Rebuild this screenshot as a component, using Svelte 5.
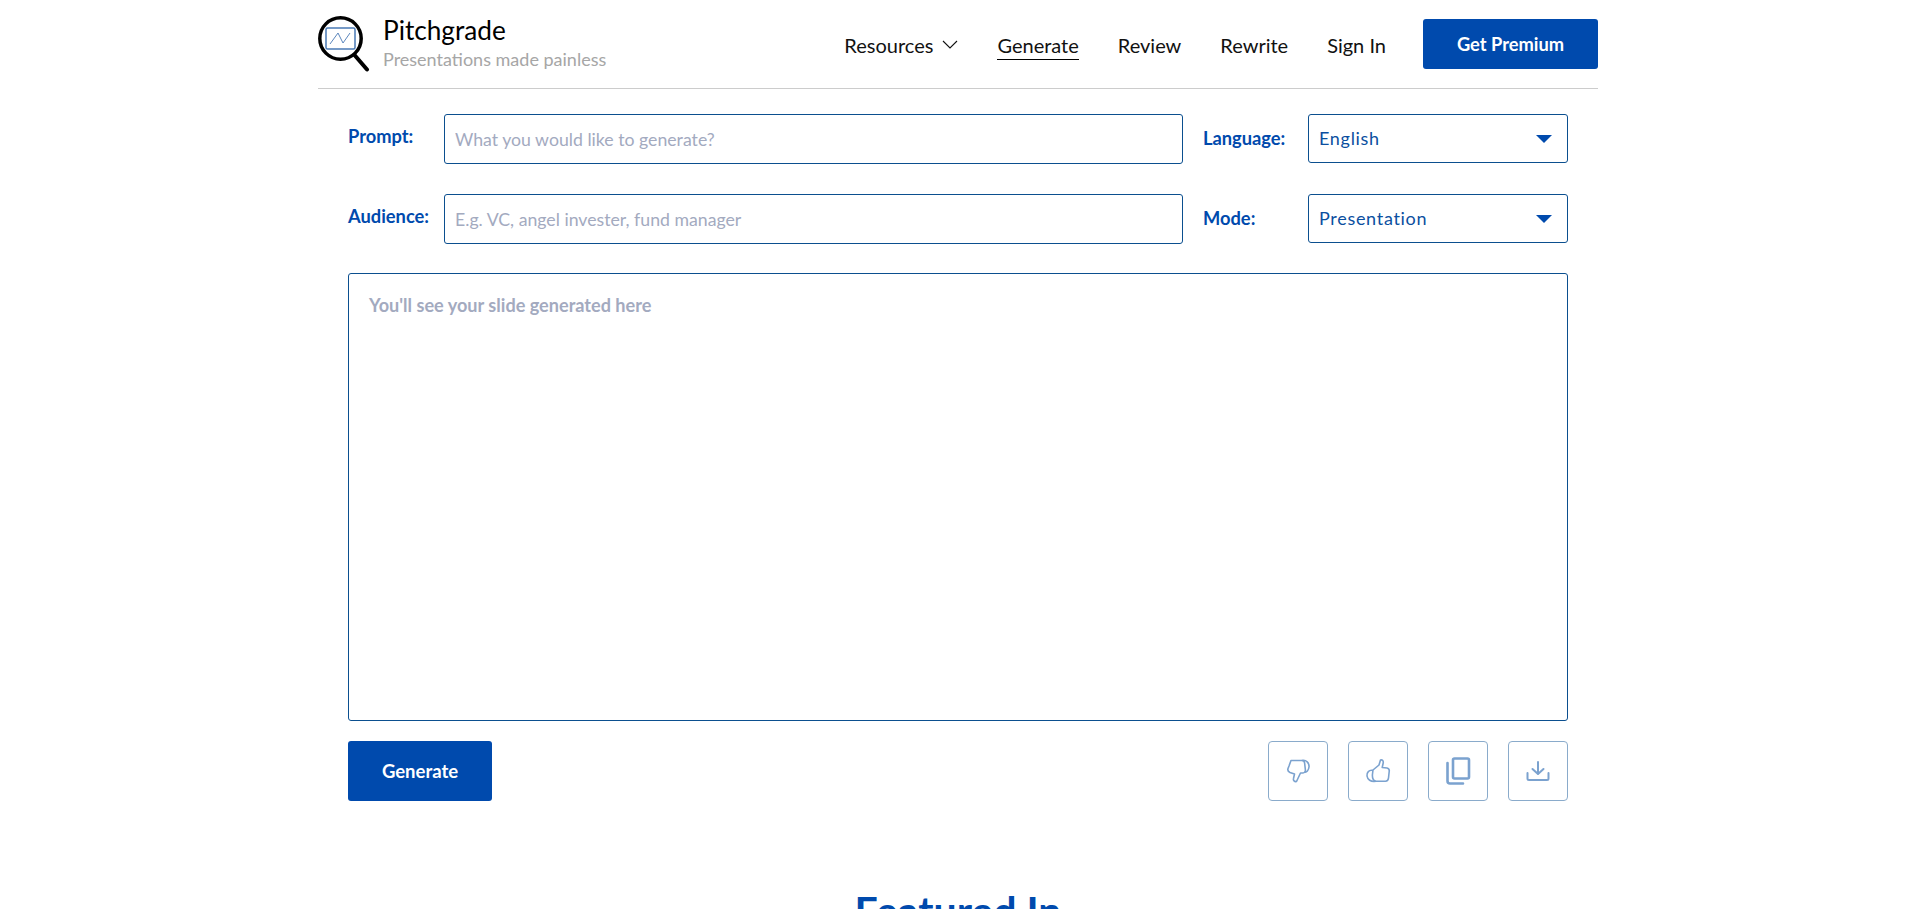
<script>
  const navLinks = ['Generate', 'Review', 'Rewrite', 'Sign In'];
</script>

<div class="page">
  <header class="topbar">
    <div class="brand">
      <svg class="logo" width="52" height="58" viewBox="0 0 52 58" fill="none">
        <circle cx="22.5" cy="24.5" r="20.7" stroke="#000" stroke-width="3.5" />
        <line x1="36.5" y1="41" x2="49" y2="55.5" stroke="#000" stroke-width="4" stroke-linecap="round" />
        <rect x="8" y="14" width="29" height="21" rx="1.5" stroke="#4a7ab5" stroke-width="1.5" />
        <path d="M12 30 L20 19 L25 29 L32 19" stroke="#5b86bd" stroke-width="1" />
      </svg>
      <div class="brand-text">
        <div class="brand-name">Pitchgrade</div>
        <div class="brand-tag">Presentations made painless</div>
      </div>
    </div>
    <nav class="nav">
      <a class="nav-link res">
        Resources
        <svg width="16" height="9" viewBox="0 0 16 9" fill="none">
          <path d="M1 1 L8 8 L15 1" stroke="#111" stroke-width="1.1" />
        </svg>
      </a>
      {#each navLinks as link}
        <a class="nav-link" class:active={link === 'Generate'}>{link}</a>
      {/each}
      <button class="premium">Get Premium</button>
    </nav>
  </header>

  <main class="form">
    <div class="fields">
      <label class="lbl lbl-prompt" for="prompt">Prompt:</label>
      <input id="prompt" class="text-in" placeholder="What you would like to generate?" />
      <span class="lbl lbl-side">Language:</span>
      <div class="sel">
        <span>English</span>
        <svg width="16" height="8" viewBox="0 0 16 8"><path d="M0 0 H16 L8 8 Z" fill="#004aad" /></svg>
      </div>

      <label class="lbl lbl-prompt" for="audience">Audience:</label>
      <input id="audience" class="text-in" placeholder="E.g. VC, angel invester, fund manager" />
      <span class="lbl lbl-side">Mode:</span>
      <div class="sel">
        <span>Presentation</span>
        <svg width="16" height="8" viewBox="0 0 16 8"><path d="M0 0 H16 L8 8 Z" fill="#004aad" /></svg>
      </div>
    </div>

    <textarea class="output" placeholder="You'll see your slide generated here"></textarea>

    <div class="actions">
      <button class="generate">Generate</button>
      <div class="tools">
        <button class="tool" aria-label="Dislike">
          <svg width="26" height="26" viewBox="0 0 26 26" fill="none" stroke="#7ba2cf" stroke-width="1.6" stroke-linejoin="round">
            <path d="M6 2.5 H17 C18.5 2.5 19.5 3.5 19.6 5 L20.4 12 C20.5 14 19 15 17.5 15 L15.5 15 L11.5 23.5 C9.5 24 8 22.5 8.5 20.5 L9.5 16 L5 14.5 C3 13.5 2.5 12 3 10.5 L4 8 Z" />
            <path d="M17 2.5 C21 1.5 24.5 5 24 9 C23.6 12.5 21.5 14.5 19.8 14" />
          </svg>
        </button>
        <button class="tool" aria-label="Like">
          <svg width="26" height="26" viewBox="0 0 26 26" fill="none" stroke="#7ba2cf" stroke-width="1.6" stroke-linejoin="round">
            <path d="M8 12 L14 7 L15.5 2 C17.5 1.5 18.5 3 18.2 5 L17.2 9.5 L22 10 C24 10.5 24.5 12 24.2 13.5 L23.5 20 C23.2 22.5 22 23.2 20.5 23.2 H11 C8.5 23.2 7 20 7.5 16 Z" />
            <path d="M8 12.5 C4 11.5 1.5 14.5 2 18 C2.5 21.5 5.5 24 11 23.2" />
          </svg>
        </button>
        <button class="tool" aria-label="Copy">
          <svg width="26" height="30" viewBox="0 0 26 30" fill="none" stroke="#7ba2cf" stroke-width="2.6" stroke-linejoin="round">
            <rect x="8" y="2.5" width="16" height="20" rx="1.5" />
            <path d="M2.5 7 V25 C2.5 26.5 3.5 27.5 5 27.5 H18" stroke-linecap="round" />
          </svg>
        </button>
        <button class="tool" aria-label="Download">
          <svg width="24" height="22" viewBox="0 0 24 22" fill="none" stroke="#7ba2cf" stroke-width="2" stroke-linecap="round" stroke-linejoin="round">
            <path d="M12 2 V13.5" />
            <path d="M6.5 9 L12 14 L17.5 9" />
            <path d="M1.5 13 V18.5 C1.5 19.5 2 20 3 20 H21 C22 20 22.5 19.5 22.5 18.5 V13" />
          </svg>
        </button>
      </div>
    </div>
  </main>

  <h2 class="featured">Featured In</h2>
</div>

<style>
  :global(body) {
    margin: 0;
    background: #fff;
    font-family: Lato, "Liberation Sans", sans-serif;
    overflow: hidden;
  }

  .page {
    width: 1280px;
    margin: 0 auto;
  }

  .topbar {
    height: 88px;
    border-bottom: 1px solid #ccc;
    display: flex;
    justify-content: space-between;
    align-items: center;
  }

  .brand {
    display: flex;
    align-items: center;
    gap: 13px;
  }

  .logo {
    margin-bottom: 2px;
  }

  .brand-text {
    margin-bottom: 4px;
  }

  .brand-name {
    font-size: 26.2px;
    line-height: 32px;
    color: #000;
  }

  .brand-tag {
    font-size: 18px;
    line-height: 22px;
    color: #a6a6a6;
    margin-top: 2px;
  }

  .nav {
    display: flex;
    align-items: center;
    gap: 39px;
  }

  .nav-link {
    font-size: 20px;
    line-height: 28px;
    color: #111;
    border-bottom: 1px solid transparent;
    margin-top: 2px;
  }

  .res {
    display: flex;
    align-items: center;
    gap: 9px;
  }

  .active {
    border-bottom-color: #000;
  }

  .premium {
    width: 175px;
    height: 50px;
    margin-left: -2px;
    background: #004aad;
    color: #fff;
    border: 0;
    border-radius: 3px;
    font: 700 18.3px Lato, sans-serif;
  }

  .form {
    padding: 25px 30px 0;
  }

  .fields {
    display: grid;
    grid-template-columns: 96px 739px 125px 260px;
    row-gap: 30px;
  }

  .lbl {
    font-size: 18.3px;
    font-weight: 700;
    color: #004aad;
    line-height: 22px;
  }

  .lbl-prompt {
    padding-top: 11px;
  }

  .lbl-side {
    padding: 13px 0 0 20px;
  }

  .text-in {
    box-sizing: border-box;
    width: 739px;
    height: 50px;
    border: 1px solid #0b4f8f;
    border-radius: 3px;
    padding: 0 10px;
    font: 17.7px Lato, sans-serif;
    outline: none;
  }

  .text-in::placeholder {
    color: #a3aabf;
    opacity: 1;
  }

  .sel {
    box-sizing: border-box;
    height: 49px;
    border: 1px solid #0b4f8f;
    border-radius: 3px;
    padding: 0 15px 1px 10px;
    display: flex;
    align-items: center;
    justify-content: space-between;
    font-size: 18px;
    letter-spacing: 0.7px;
    color: #0b4f9f;
  }

  .sel svg {
    margin-top: 2px;
  }

  .output {
    display: block;
    box-sizing: border-box;
    width: 1220px;
    height: 448px;
    margin-top: 29px;
    border: 1px solid #0b4f8f;
    border-radius: 3px;
    padding: 20px 20px;
    font: 700 18.1px/22px Lato, sans-serif;
    resize: none;
    outline: none;
  }

  .output::placeholder {
    color: #a3aabf;
    opacity: 1;
  }

  .actions {
    display: flex;
    justify-content: space-between;
    margin-top: 20px;
  }

  .generate {
    width: 144px;
    height: 60px;
    background: #004aad;
    color: #fff;
    border: 0;
    border-radius: 3px;
    font: 700 18.5px Lato, sans-serif;
  }

  .tools {
    display: flex;
    gap: 20px;
  }

  .tool {
    width: 60px;
    height: 60px;
    box-sizing: border-box;
    background: #fff;
    border: 1px solid #8aabcb;
    border-radius: 4px;
    padding: 0;
    display: flex;
    align-items: center;
    justify-content: center;
  }

  .featured {
    margin: 86px 0 0;
    text-align: center;
    font-size: 41px;
    line-height: 48px;
    font-weight: 700;
    color: #004aad;
  }
</style>
